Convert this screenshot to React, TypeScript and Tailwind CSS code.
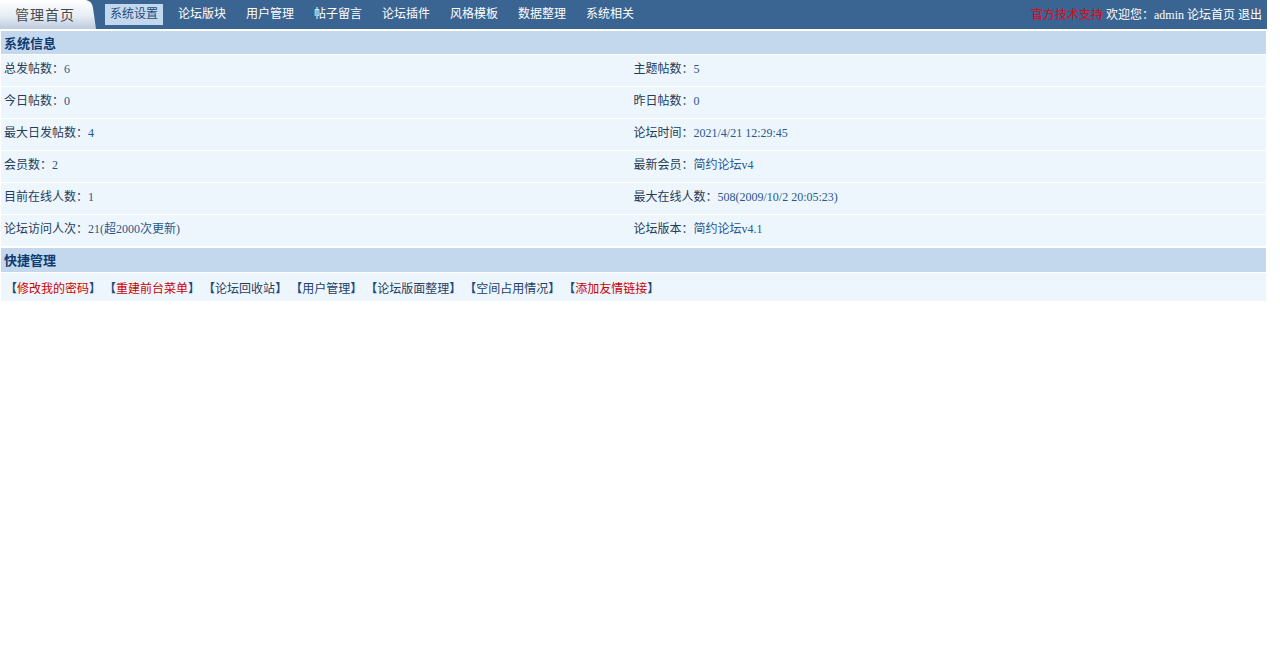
const NAV = ["系统设置", "论坛版块", "用户管理", "帖子留言", "论坛插件", "风格模板", "数据整理", "系统相关"];

const INFO: [string, string, string, string][] = [
  ["总发帖数：", "6", "主题帖数：", "5"],
  ["今日帖数：", "0", "昨日帖数：", "0"],
  ["最大日发帖数：", "4", "论坛时间：", "2021/4/21 12:29:45"],
  ["会员数：", "2", "最新会员：", "简约论坛v4"],
  ["目前在线人数：", "1", "最大在线人数：", "508(2009/10/2 20:05:23)"],
  ["论坛访问人次：", "21(超2000次更新)", "论坛版本：", "简约论坛v4.1"],
];

const QUICK = [
  { text: "修改我的密码", red: true },
  { text: "重建前台菜单", red: true },
  { text: "论坛回收站", red: false },
  { text: "用户管理", red: false },
  { text: "论坛版面整理", red: false },
  { text: "空间占用情况", red: false },
  { text: "添加友情链接", red: true },
];

const font = { fontFamily: '"Liberation Serif", "Noto Sans CJK SC", serif' };

function HomeTab() {
  return (
    <div className="relative h-[29px] w-[98px] shrink-0">
      <svg className="absolute inset-0" width="98" height="29" viewBox="0 0 98 29">
        <defs>
          <linearGradient id="tabg" x1="0" y1="0" x2="0" y2="1">
            <stop offset="0" stopColor="#ffffff" />
            <stop offset="0.55" stopColor="#e6edf5" />
            <stop offset="1" stopColor="#bccbdc" />
          </linearGradient>
        </defs>
        <path d="M0 0 H86 Q92 1 93 8 L96 29 H0 Z" fill="url(#tabg)" />
      </svg>
      <span
        className="relative block pl-[15px] pt-[4px] text-[14px] leading-[20px] tracking-[1px] text-[#4a4a4a]"
        style={{ fontFamily: '"Noto Sans CJK SC", sans-serif' }}
      >
        管理首页
      </span>
    </div>
  );
}

export default function App() {
  return (
    <div className="w-[1267px] bg-white text-[12px]" style={font}>
      <div className="flex h-[29px] items-center bg-[#3a6491]">
        <HomeTab />
        <div className="ml-[7px] flex gap-[10px]">
          {NAV.map((n, i) => (
            <span
              key={n}
              className={
                i === 0
                  ? "h-[21px] w-[58px] bg-[#c4d8ed] px-[5px] leading-[21px] text-[#1d4d80]"
                  : "h-[21px] w-[58px] px-[5px] leading-[21px] text-white"
              }
            >
              {n}
            </span>
          ))}
        </div>
        <div className="ml-auto pr-[5px] text-[12px] text-white">
          <span className="text-[#e60012]">官方技术支持</span> 欢迎您：admin 论坛首页 退出
        </div>
      </div>
      <div className="ml-px mt-[2px] flex w-[1265px] flex-col gap-px">
        <div className="h-[23px] bg-[#c4d8ed] pl-[3px] text-[13px] font-bold leading-[26px] text-[#0e3c73]">
          系统信息
        </div>
        {INFO.map(([a, b, c, d]) => (
          <div key={a} className="grid h-[31px] grid-cols-2 bg-[#eef6fd]">
            <div className="pl-[3px] pt-[6px] leading-[16px]">
              <span className="text-[#233c5a]">{a}</span>
              <span className="text-[#28568e]">{b}</span>
            </div>
            <div className="pt-[6px] leading-[16px]">
              <span className="text-[#233c5a]">{c}</span>
              <span className="text-[#28568e]">{d}</span>
            </div>
          </div>
        ))}
        <div className="mt-px h-[24px] bg-[#c4d8ed] pl-[3px] text-[13px] font-bold leading-[26px] text-[#0e3c73]">
          快捷管理
        </div>
        <div className="h-[28px] bg-[#eef6fd] pl-[4px] pt-[8px] leading-[16px]">
          {QUICK.map((q, i) => (
            <span key={q.text}>
              {i > 0 && " "}
              <b className="text-[#1a4a80]">【</b>
              <span className={q.red ? "text-[#cc0000]" : "text-[#1e3f66]"}>{q.text}</span>
              <b className="text-[#1a4a80]">】</b>
            </span>
          ))}
        </div>
      </div>
    </div>
  );
}
